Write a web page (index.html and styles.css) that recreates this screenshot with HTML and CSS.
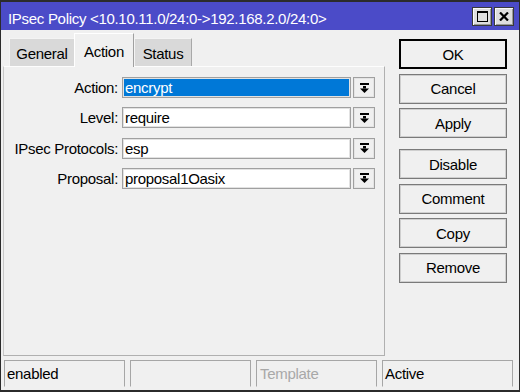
FILE: index.html
```html
<!DOCTYPE html>
<html>
<head>
<meta charset="utf-8">
<link rel="stylesheet" href="styles.css">
</head>
<body>
<div class="window">
  <div class="titlebar">
    <div class="title">IPsec Policy &lt;10.10.11.0/24:0-&gt;192.168.2.0/24:0&gt;</div>
    <div class="tbtns">
      <div class="tbtn"><svg width="11" height="11" viewBox="0 0 11 11"><rect x="0.5" y="0.5" width="10" height="10" fill="none" stroke="#000" stroke-width="1"/><rect x="0" y="0" width="11" height="2" fill="#000"/></svg></div>
      <div class="tbtn"><svg width="10" height="9" viewBox="0 0 10 9"><path d="M1 0.5 L9 8.5 M9 0.5 L1 8.5" stroke="#000" stroke-width="2.2" fill="none"/></svg></div>
    </div>
  </div>
  <div class="main">
    <div class="left">
      <div class="tabs">
        <div class="tab t-general">General</div>
        <div class="tab active t-action">Action</div>
        <div class="tab t-status">Status</div>
      </div>
      <div class="panel">
        <div class="row">
          <div class="label">Action:</div>
          <div class="input"><div class="val sel">encrypt</div></div>
          <div class="dd"><svg width="9" height="10" viewBox="0 0 9 10"><rect x="0" y="0" width="9" height="2" fill="#000"/><rect x="3" y="3" width="3" height="2.5" fill="#000"/><path d="M0 5.5 H9 L4.5 10 Z" fill="#000"/></svg></div>
        </div>
        <div class="row">
          <div class="label">Level:</div>
          <div class="input"><div class="val">require</div></div>
          <div class="dd"><svg width="9" height="10" viewBox="0 0 9 10"><rect x="0" y="0" width="9" height="2" fill="#000"/><rect x="3" y="3" width="3" height="2.5" fill="#000"/><path d="M0 5.5 H9 L4.5 10 Z" fill="#000"/></svg></div>
        </div>
        <div class="row">
          <div class="label">IPsec Protocols:</div>
          <div class="input"><div class="val">esp</div></div>
          <div class="dd"><svg width="9" height="10" viewBox="0 0 9 10"><rect x="0" y="0" width="9" height="2" fill="#000"/><rect x="3" y="3" width="3" height="2.5" fill="#000"/><path d="M0 5.5 H9 L4.5 10 Z" fill="#000"/></svg></div>
        </div>
        <div class="row">
          <div class="label">Proposal:</div>
          <div class="input"><div class="val">proposal1Oasix</div></div>
          <div class="dd"><svg width="9" height="10" viewBox="0 0 9 10"><rect x="0" y="0" width="9" height="2" fill="#000"/><rect x="3" y="3" width="3" height="2.5" fill="#000"/><path d="M0 5.5 H9 L4.5 10 Z" fill="#000"/></svg></div>
        </div>
      </div>
    </div>
    <div class="buttons">
      <div class="btn default">OK</div>
      <div class="btn">Cancel</div>
      <div class="btn">Apply</div>
      <div class="btn sep">Disable</div>
      <div class="btn">Comment</div>
      <div class="btn">Copy</div>
      <div class="btn">Remove</div>
    </div>
  </div>
  <div class="statusbar">
    <div class="cell">enabled</div>
    <div class="cell"></div>
    <div class="cell muted">Template</div>
    <div class="cell last">Active</div>
  </div>
</div>
</body>
</html>
```
FILE: styles.css
```css
* { box-sizing: border-box; }
html, body {
  margin: 0;
  padding: 0;
  background: #f0f0f0;
}
body {
  font-family: "Liberation Sans", Arial, sans-serif;
  font-size: 15px;
  letter-spacing: -0.3px;
  color: #000;
}
.window {
  width: 520px;
  height: 392px;
  border: 1px solid #2b2b2b;
  border-top-width: 2px;
  border-bottom-width: 2px;
  display: flex;
  flex-direction: column;
  background: #f0f0f0;
}
.titlebar {
  height: 28px;
  flex: none;
  background: #4b4bc8;
  color: #fff;
  display: flex;
  align-items: flex-start;
  justify-content: space-between;
  padding-left: 7px;
  padding-right: 5px;
}
.title {
  margin-top: 8px;
  line-height: 17px;
  white-space: nowrap;
}
.tbtns {
  display: flex;
  gap: 2px;
  margin-top: 5px;
}
.tbtn {
  width: 20px;
  height: 19px;
  background: #dedede;
  border: 1px solid #3a3a3a;
  box-shadow: inset 1px 1px 0 #fafafa, inset -1px -1px 0 #9a9a9a;
  display: flex;
  align-items: center;
  justify-content: center;
}
.main {
  flex: 1;
  display: flex;
  padding-left: 2px;
  min-height: 0;
}
.left {
  width: 382px;
  display: flex;
  flex-direction: column;
  padding-top: 3px;
}
.tabs {
  height: 33px;
  display: flex;
  align-items: flex-end;
  padding-left: 6px;
  position: relative;
  z-index: 1;
}
.tab {
  height: 28px;
  padding-top: 6px;
  line-height: 17px;
  text-align: center;
  background: #d9d9d9;
  border-top: 1px solid #f4f4f4;
  border-left: 1px solid #f4f4f4;
}
.t-general { width: 65px; }
.t-action { width: 60px; }
.t-status { width: 58px; border-right: 1px solid #a8a8a8; }
.tab.active {
  height: 34px;
  margin-bottom: -1px;
  padding-top: 9px;
  background: #f0f0f0;
  border-top: 1px solid #ffffff;
  border-left: 1px solid #ffffff;
  border-right: 1px solid #a0a0a0;
}
.panel {
  flex: 1;
  border: 1px solid #b0b0b0;
  border-top-color: #fdfdfd;
  border-left-color: #c8c8c8;
  padding-top: 10px;
  display: flex;
  flex-direction: column;
  gap: 9.3px;
}
.row {
  display: flex;
  height: 21px;
}
.label {
  width: 114px;
  text-align: right;
  padding-top: 2px;
  line-height: 17px;
  margin-right: 4px;
  white-space: nowrap;
}
.input {
  width: 229px;
  height: 21px;
  border: 1px solid #a0a0a0;
  padding: 1px;
  background: #fff;
  box-shadow: inset 0 0 0 1px #e2e2e2;
}
.val {
  height: 17px;
  padding-top: 1px;
  padding-left: 1px;
  line-height: 16px;
  white-space: nowrap;
  overflow: visible;
}
.val.sel {
  background: #0078d7;
  color: #fff;
}
.dd {
  width: 22px;
  height: 21px;
  margin-left: 2px;
  border: 1px solid #a0a0a0;
  background: #f0f0f0;
  box-shadow: inset 0 0 0 1px #e4e4e4;
  display: flex;
  align-items: center;
  justify-content: center;
}
.buttons {
  margin-left: 14px;
  width: 108px;
  padding-top: 9px;
  display: flex;
  flex-direction: column;
  gap: 4.5px;
}
.btn {
  height: 30px;
  border: 1px solid #7a7a7a;
  box-shadow: inset 0 0 0 1px #cfcfcf;
  background: #f0f0f0;
  display: flex;
  align-items: center;
  justify-content: center;
  line-height: 17px;
}
.btn.default {
  border: 2px solid #000;
  box-shadow: none;
}
.btn.sep {
  margin-top: 6.5px;
}
.statusbar {
  height: 34px;
  flex: none;
  display: flex;
  gap: 5px;
  padding: 4px 6px 3px 3px;
}
.cell {
  width: 121px;
  height: 27px;
  border: 1px solid #a6a6a6;
  border-bottom-color: #f0f0f0;
  padding: 4px 0 0 2px;
  line-height: 17px;
  white-space: nowrap;
}
.cell.muted { color: #a8a8a8; padding-left: 3px; }
.cell.last { flex: 1; width: auto; }
```
